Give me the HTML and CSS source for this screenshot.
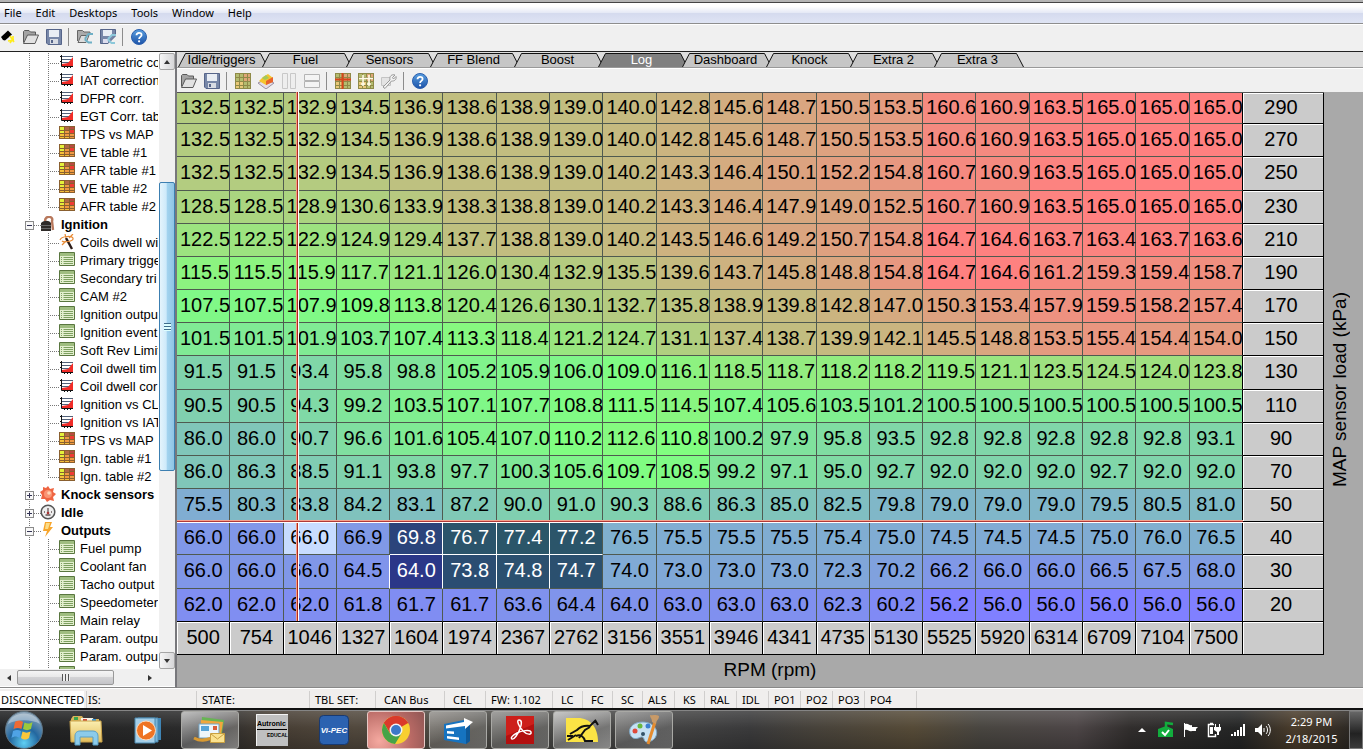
FILE: index.html
```html
<!DOCTYPE html>
<html lang="en">
<head>
<meta charset="utf-8">
<title>ECU tuning – Log</title>
<link rel="stylesheet" href="styles.css">
</head>
<body>
<svg class="defs" aria-hidden="true">
  <defs>
    <linearGradient id="gold" x1="0" y1="0" x2="0" y2="1"><stop offset="0" stop-color="#fbeeb0"/><stop offset="1" stop-color="#e2bd5c"/></linearGradient>
    <linearGradient id="blue" x1="0" y1="0" x2="0" y2="1"><stop offset="0" stop-color="#5aa0e0"/><stop offset="1" stop-color="#1c52a8"/></linearGradient>
    <radialGradient id="orb" cx=".5" cy=".85" r=".8"><stop offset="0" stop-color="#5fd0f5"/><stop offset=".5" stop-color="#23679f"/><stop offset="1" stop-color="#8ba4b8"/></radialGradient>
    <symbol id="i-folder" viewBox="0 0 16 16"><path d="M.5 13.500V2.500l1-1H6L7.500 3h5v3" fill="#a4a4a4" stroke="#5a5a5a"/><path d="M.5 14.500 4.500 6h11L12 14.500z" fill="#e2e2e2" stroke="#5a5a5a"/></symbol>
    <symbol id="i-save" viewBox="0 0 16 16"><path d="M.5.500h15v15H2L.5 14z" fill="#7787a8" stroke="#56658a"/><path d="M3 1h10v7H3z" fill="#e8edf4"/><path d="M4 10h8v5H4z" fill="#d8dce4"/><path d="M5 11h2v3H5z" fill="#56658a"/></symbol>
    <symbol id="i-folder2" viewBox="0 0 16 16"><path d="M.5 12V1.500h5L7 3h6v3" fill="#aaa" stroke="#666"/><path d="M1 13.500 4 6.500h8L9 13.500z" fill="#ddd" stroke="#666"/><path d="M16 5h-4.500L8.500 9v2l3 2.500H15" fill="none" stroke="#6fb0c6" stroke-width="2"/></symbol>
    <symbol id="i-save2" viewBox="0 0 16 16"><path d="M.5.500h15V7L8 14.500H.5z" fill="#7787a8" stroke="#56658a"/><path d="M3 1h9v6H3z" fill="#e8edf4"/><path d="M3 10h5v4H3z" fill="#dde"/><path d="M16 6h-4L8.500 9.500v1.500l3 3H15" fill="none" stroke="#8cc8da" stroke-width="2"/></symbol>
    <symbol id="i-help" viewBox="0 0 16 16"><circle cx="8" cy="8" r="7.500" fill="url(#blue)" stroke="#2b5fae"/><path d="M5.500 6.300C5.500 3 10.600 3 10.600 6c0 1.900-2.500 1.900-2.500 4" fill="none" stroke="#fff" stroke-width="1.800"/><circle cx="8.100" cy="12.300" r="1.100" fill="#fff"/></symbol>
    <symbol id="i-torch" viewBox="0 0 16 16"><path d="m1 8 7-6.500 4 4-7 6L3 11z" fill="#000"/><path d="m10 7 4 6M13 7v4M8 12l6-1M10 14l2-3" stroke="#ffec1a" stroke-width="1.600"/></symbol>
    <symbol id="i-grid" viewBox="0 0 16 16"><path d="M0 0h16v16H0z" fill="#b4bc70"/><path d="M8 0h8v9H8z" fill="#dfa677"/><path d="M0 9h8v7H0z" fill="#e8c878"/><path d="M0 .5h16M0 4.500h16M0 8.500h16M0 12.500h16M.5 0v16M4.500 0v16M8.500 0v16M12.500 0v16M15.500 0v16M0 15.500h16" stroke="#8f8a48"/></symbol>
    <symbol id="i-gridred" viewBox="0 0 16 16"><use href="#i-grid"/><path d="M7.500 0v16M0 6.500h16" stroke="#d8451c" stroke-width="2"/></symbol>
    <symbol id="i-gridplus" viewBox="0 0 16 16"><use href="#i-grid"/><path d="M1 5.500h14M5 2v11M11 2v11M3 11h4M9 11h4" stroke="#fffbe8" stroke-width="1.600"/></symbol>
    <symbol id="i-surface" viewBox="0 0 16 16"><path d="m0 10 8-4 8 4-8 6z" fill="#e4dce8" stroke="#9a8fa0"/><path d="m1 8 4-4 5-3 5 4-1 4-6 3z" fill="#f5c52e"/><path d="m8 8 7-4v5l-7 3z" fill="#e8642c"/><path d="m4 5 4-3 3 3-4 2z" fill="#a5c95a"/></symbol>
    <symbol id="i-cols" viewBox="0 0 16 16"><path d="M1.500.500h5v15h-5zM9.500.500h5v15h-5z" fill="#eee" stroke="#c8c8c8"/></symbol>
    <symbol id="i-rows" viewBox="0 0 16 16"><path d="M.5 1.500h15v6H.5zM.5 8.500h15v6H.5z" fill="#f4f4f4" stroke="#b4b4b4"/></symbol>
    <symbol id="i-wrench" viewBox="0 0 16 16"><path d="M.5 4.500h9v8h-9z" fill="#e4e4e4" stroke="#c4c4c4"/><path d="m2 14 7-7c-1-4 2-6 5-5l-2.500 2.500 1 1.500L15 3.500c1 3-2 5-4.500 4.500L4 15.500z" fill="#f2f2f2" stroke="#999"/></symbol>
    <symbol id="t-curve" viewBox="0 0 16 16"><path d="M2 2.500h12M2 5.500h12M2 8.500h12" stroke="#53627a"/><path d="M3 12v-2l6-1 5-6v9z" fill="#f02c28"/><path d="M2.500 1v11.500H14M1 2.500h2M1 7.500h2M5.500 12v2M8.500 12v2M11.500 12v2" fill="none" stroke="#111"/></symbol>
    <symbol id="t-map" viewBox="0 0 16 16"><path d="M0 0h16v13H0z" fill="#8a6030"/><path d="M1 1h4v3H1zM1 5h4v2H1z" fill="#e3f03a"/><path d="M1 8h4v2H1zM1 11h4v1H1zM6 11h4v1H6z" fill="#f6c03a"/><path d="M6 1h4v3H6z" fill="#b16a45"/><path d="M6 5h4v2H6zM6 8h4v2H6zM11 8h4v2h-4zM11 11h4v1h-4z" fill="#f09a42"/><path d="M11 1h4v2h-4z" fill="#b84a40"/><path d="M11 4h4v3h-4z" fill="#f03a34"/></symbol>
    <symbol id="t-form" viewBox="0 0 16 16"><path d="M.5.500h15v13H.5z" fill="#e3efcf" stroke="#59763f"/><path d="M1 1h14v3H1z" fill="#9fbd80"/><path d="M2 5.500h1M2 7.500h1M2 9.500h1M2 11.500h1M4.500 5.500H14M4.500 7.500H14M4.500 9.500H14M4.500 11.500H14" stroke="#7da060"/></symbol>
    <symbol id="t-wand" viewBox="0 0 16 16"><path d="m7 4 6 11" stroke="#2c1c18" stroke-width="2.400"/><path d="M1 6c1-4 14-5 13-1 0 2-9 4-11 2M3 11l4-4M10 4l4-4M6 0l1 4" fill="none" stroke="#e78a35" stroke-width="1.200"/></symbol>
    <symbol id="t-coil" viewBox="0 0 16 16"><path d="M1 7c3-3 8-3 10 0v8H1z" fill="#2e2a28"/><path d="M1 9.500h10M1 12.500h10" stroke="#666"/><path d="M5 5c0-6 9-5 7 0l1 9" fill="none" stroke="#b8785c" stroke-width="2.400"/></symbol>
    <symbol id="t-knock" viewBox="0 0 16 16"><path d="m8 0 2 3 4-1-1 4 3 2-3 3 1 4-4-1-3 2-2-3-4 0 1-4-2-3 3-2 0-3 3 1z" fill="#ef6542"/><circle cx="8" cy="8" r="4" fill="#fa9473"/><circle cx="9" cy="7" r="1.800" fill="#ffd5b4"/></symbol>
    <symbol id="t-idle" viewBox="0 0 16 16"><circle cx="8" cy="8" r="6.800" fill="#eee" stroke="#555" stroke-width="1.500"/><path d="M8 4v5M4 8h1M11 8h1M5.500 11h5" stroke="#655" stroke-width="1.300"/><circle cx="8" cy="9" r="1.300" fill="#a33"/></symbol>
    <symbol id="t-bolt" viewBox="0 0 16 16"><path d="M5 0h7l-2 5h3L5 15l2-6H3z" fill="#f7a52b"/><path d="M6 1h4L8 7H5z" fill="#fbdc87"/></symbol>
  </defs>
</svg>

<nav class="menubar">
  <button>File</button><button>Edit</button><button>Desktops</button><button>Tools</button><button>Window</button><button>Help</button>
</nav>
<div class="toolbar toolbar-main">
  <button class="tool first" aria-label="Find"><svg><use href="#i-torch"/></svg></button>
  <button class="tool" aria-label="Open"><svg><use href="#i-folder"/></svg></button>
  <button class="tool" aria-label="Save"><svg><use href="#i-save"/></svg></button>
  <span class="sep"></span>
  <button class="tool" aria-label="Open layout"><svg><use href="#i-folder2"/></svg></button>
  <button class="tool" aria-label="Save layout"><svg><use href="#i-save2"/></svg></button>
  <span class="sep"></span>
  <button class="tool" aria-label="Help"><svg><use href="#i-help"/></svg></button>
</div>

<main class="workspace">
  <aside class="sidebar">
    <ul class="tree" id="tree"></ul>
    <div class="vscroll">
      <button class="scroll-btn" aria-label="Scroll up"><i class="arrow up"></i></button>
      <div class="vtrack"><div class="vthumb"><i class="grip"></i></div></div>
      <button class="scroll-btn" aria-label="Scroll down"><i class="arrow down"></i></button>
    </div>
    <div class="hscroll">
      <button class="hbtn" aria-label="Scroll left"><i class="arrow left"></i></button>
      <div class="htrack"><div class="hthumb"><i class="grip side"></i></div></div>
      <button class="hbtn" aria-label="Scroll right"><i class="arrow right"></i></button>
    </div>
  </aside>

  <section class="desk">
    <div class="tabs" id="tabs"></div>
    <div class="toolbar toolbar-log">
      <button class="tool" aria-label="Open log"><svg><use href="#i-folder"/></svg></button>
      <button class="tool" aria-label="Save log"><svg><use href="#i-save"/></svg></button>
      <span class="sep"></span>
      <button class="tool" aria-label="Table view"><svg><use href="#i-grid"/></svg></button>
      <button class="tool" aria-label="3D view"><svg><use href="#i-surface"/></svg></button>
      <button class="tool" aria-label="Split columns"><svg><use href="#i-cols"/></svg></button>
      <button class="tool" aria-label="Split rows"><svg><use href="#i-rows"/></svg></button>
      <span class="sep"></span>
      <button class="tool" aria-label="Crosshair"><svg><use href="#i-gridred"/></svg></button>
      <button class="tool" aria-label="Interpolate"><svg><use href="#i-gridplus"/></svg></button>
      <button class="tool" aria-label="Settings"><svg><use href="#i-wrench"/></svg></button>
      <span class="sep"></span>
      <button class="tool" aria-label="Help"><svg><use href="#i-help"/></svg></button>
    </div>
    <div class="chart">
      <div class="map-wrap">
        <table class="map">
          <colgroup><col span="20"><col class="axis-col"></colgroup>
          <tbody id="map"></tbody>
        </table>
        <span class="cross-v"></span><span class="cross-h"></span>
      </div>
      <div class="y-title"><span>MAP sensor load (kPa)</span></div>
      <div class="x-title">RPM (rpm)</div>
    </div>
  </section>
</main>

<footer class="status">
  <span class="conn"><b>DISCONNECTED</b></span><span class="is">IS:</span><span>STATE:</span><span>TBL SET:</span><span class="in">CAN Bus</span><span class="in">CEL</span><span>FW: 1.102</span><span class="in">LC</span><span class="in">FC</span><span class="in">SC</span><span>ALS</span><span class="in">KS</span><span>RAL</span><span>IDL</span><span>PO1</span><span>PO2</span><span>PO3</span><span>PO4</span><span></span>
</footer>

<div class="taskbar">
  <button class="start" aria-label="Start"><svg width="40" height="40" viewBox="0 0 40 40"><circle cx="20" cy="20" r="18.500" fill="url(#orb)" stroke="#5d7382"/><path d="M11 12c3-2 5-2 8 0l-1.500 7c-3-1.500-5-1.500-8 0z" fill="#ee6a34"/><path d="M20.500 12.500c3 1.500 5 1.500 8-.5L27 19c-3 1.500-5 1.500-8 0z" fill="#9cc93b"/><path d="M9 21c3-1.500 5-1.500 8 0l-1.500 7c-3-2-5-2-8 0z" fill="#4fa3e6"/><path d="M18.500 21.500c3 1.500 5 1.500 8 0L25 28c-3 2-5 2-8 0z" fill="#fbc73a"/><path d="M4 14C8 0 32 0 36 14 28 9 12 9 4 14z" fill="#fff" opacity=".35"/></svg></button>
  <button class="task" aria-label="Explorer"><svg width="34" height="32" viewBox="0 0 34 32"><path d="M2 5 4 2h9l2 3h15v20H2z" fill="#d9b45a"/><path d="M5 3h4v3H5z" fill="#3ba54e"/><path d="M12 4h12l1 3H12z" fill="#f6f1e2"/><path d="M14 5h4v2h-4z" fill="#d24f3f"/><path d="M23 5h4v3h-4z" fill="#3e9bd8"/><path d="M1 7h31l1 21H2z" fill="url(#gold)" stroke="#c9a34b"/><path d="M6 31v-9c0-4 3-5 5-5h13c3 0 5 2 5 5v9h-5v-8H11v8z" fill="#8ccbea" stroke="#5b9fc4"/></svg></button>
  <button class="task" aria-label="Media Player"><svg width="32" height="30" viewBox="0 0 32 30"><path d="M10 3h19v22H10z" fill="#3f85b5"/><path d="M6 3h20v24H6z" fill="#78b4d8" stroke="#4a88ae"/><path d="M3 3h20v25H3z" fill="#a4cfe9" stroke="#4a88ae"/><circle cx="14" cy="15.500" r="9.500" fill="#ee7424" stroke="#fbdcc0"/><path d="m11 10 9 5.500-9 5.500z" fill="#fff"/></svg></button>
  <button class="task open lit" aria-label="Mail"><svg width="34" height="32" viewBox="0 0 34 32"><path d="m9 3 22 3-3 20-20-3z" fill="#68b454"/><path d="m8 6 22 2-3 19-20-3z" fill="#f2a63d"/><path d="M6 10h20v14H6z" fill="#eef6fb" stroke="#70a4c6"/><path d="M8 12h8v5H8z" fill="#58a4d8"/><path d="M20 12h4v4h-4z" fill="#d95d3c"/><path d="M1 24c7 4 12 2 18 0" stroke="#d99a32" stroke-width="3" fill="none"/><path d="M17.500 19.500h14v9h-14z" fill="#fae28f" stroke="#c9a040"/><path d="m18 20 6.500 5 6.500-5" fill="none" stroke="#c9a040"/></svg></button>
  <button class="task" aria-label="Autronic"><svg width="32" height="32" viewBox="0 0 32 32"><path d="M0 0h32v32H0z" fill="#c0c0c0"/><path d="M.5 32V.5H32" fill="none" stroke="#f4f4f4"/><text x="1" y="12" class="autronic">Autronic</text><path d="M1 15.500h30" stroke="#000"/><text x="11" y="23" class="autronic small">EDUCAL</text></svg></button>
  <button class="task" aria-label="Vi-PEC"><svg width="30" height="30" viewBox="0 0 30 30"><rect x=".5" y=".5" width="29" height="29" rx="4" fill="#2b62b0" stroke="#193a70"/><text x="15" y="18" text-anchor="middle" class="vipec">Vi-PEC</text></svg></button>
  <button class="task open chrome" aria-label="Chrome"><svg width="30" height="30" viewBox="0 0 30 30"><circle cx="15" cy="15" r="14" fill="#f8cf30"/><path d="M15 15 2.900 8A14 14 0 0 1 27.100 8z" fill="#da3a2b"/><path d="M15 8h12.100A14 14 0 0 0 2.900 8L9 18z" fill="#da3a2b"/><path d="M2.900 8A14 14 0 0 0 14 29l6.500-10.500L9 18.500z" fill="#46a348"/><circle cx="15" cy="15" r="6.500" fill="#f3f3f3"/><circle cx="15" cy="15" r="5" fill="#3c78c8"/></svg></button>
  <button class="task open" aria-label="Vi-PEC tuner"><svg width="32" height="30" viewBox="0 0 32 30"><path d="M2 9 22 5l6 3v18l-4 3-22-4z" fill="#1673c0"/><path d="m24 8 4-1v19l-4 3z" fill="#0f5898"/><path d="M4 10.500 22 7V3l9 4-8 7v-3L4 13.500z" fill="#fff"/><path d="m5 16 7 .5V19l-7-.5zM5 21l12 1.500V25L5 23.500z" fill="#fff"/></svg></button>
  <button class="task open" aria-label="Adobe Reader"><svg width="30" height="28" viewBox="0 0 30 28"><path d="M1 0h28v28H1z" fill="#b3100f"/><path d="M1 0h28v8L1 20z" fill="#dd2a22" opacity=".6"/><path d="M14 4c-3 0 0 7 4 11s9 4 8 1-10-1-14 1-7 5-5 6 6-5 8-10 2-9-1-9z" fill="none" stroke="#fff" stroke-width="1.500"/></svg></button>
  <button class="task open lit" aria-label="Autronic software"><svg width="34" height="26" viewBox="0 0 34 26"><path d="M1 1h12c12 0 20 9 20 24H1z" fill="#fbe345"/><path d="m3 23 8-5M5 17l7-4c3-3 6-5 13-4l6-6M11 19c5-2 8 1 9 5l8 0M14 21l6-8 5-3M2 19l6 0M30 3l3 5" fill="none" stroke="#111" stroke-width="2"/></svg></button>
  <button class="task open" aria-label="Paint"><svg width="34" height="32" viewBox="0 0 34 32"><path d="M3 20C0 10 14 5 24 10c9 5 7 17-4 18-4 0-2-6-6-5-4 2-9 3-11-3z" fill="#c6e1f3" stroke="#7fa8c6"/><circle cx="8" cy="17" r="2.500" fill="#df4a3a"/><circle cx="13" cy="12" r="2.500" fill="#68b83d"/><circle cx="21" cy="12" r="2.500" fill="#3c7fd0"/><circle cx="16" cy="20" r="2" fill="#34536a"/><path d="m28 8-7 22" stroke="#e58c2f" stroke-width="3"/><path d="M25 8c0-4-2-4-2-7 3 1 6-1 9 1 0 4-3 4-3 8z" fill="#c89a68"/></svg></button>
  <div class="tray">
    <svg width="24" height="20" viewBox="0 0 24 20"><path d="m8 12 4-4 4 4z" fill="#fff"/></svg>
    <svg width="24" height="20" viewBox="0 0 24 20"><path d="m4 9 8-3 7 3v8H4z" fill="#12ad3d"/><path d="M12 8V3l7 1" stroke="#12ad3d" stroke-width="2.500" fill="none"/><path d="m8 12 3 3 4-5" stroke="#fff" stroke-width="2" fill="none"/></svg>
    <svg width="24" height="20" viewBox="0 0 24 20"><path d="M6.500 3v14" stroke="#fff"/><path d="M7 4c4-1 4 2 7 1v6c-3 1-4-2-7-1zM14 7h6l-2 2 0 2h-4z" fill="#fff"/></svg>
    <svg width="24" height="20" viewBox="0 0 24 20"><path d="M12 4.500H6.500v12h7V14M8 3.500h3" stroke="#fff" stroke-width="1.500" fill="none"/><path d="M8 7h3v7H8z" fill="#fff"/><path d="M12 7h7v3l-2 2v3h-2v-3l-3-2zM13 4h1v3h-1zM17 4h1v3h-1z" fill="#fff"/></svg>
    <svg width="24" height="20" viewBox="0 0 24 20"><path d="M5 14h2v2H5zM8 12h2v4H8zM11 10h2v6h-2zM14 7h2v9h-2zM17 4h2v12h-2z" fill="#fff"/></svg>
    <svg width="24" height="20" viewBox="0 0 24 20"><path d="M5 8h3l4-4v12l-4-4H5z" fill="#fff"/><path d="M14 8v4M16 6c2 2 2 6 0 8M18 4c3 3 3 9 0 12" stroke="#fff" fill="none"/></svg>
    <time class="clock">2:29 PM<br>2/18/2015</time>
    <button class="peek" aria-label="Show desktop"></button>
  </div>
</div>
<script src="script.js"></script>
</body>
</html>
```
FILE: styles.css
```css
* { box-sizing: border-box; }
body {
  margin: 0;
  height: 100vh;
  display: flex;
  flex-direction: column;
  overflow: hidden;
  background: #f0f0f0;
  color: #000;
  font: 13px "Liberation Sans", Arial, sans-serif;
}
button { border: 0; padding: 0; margin: 0; background: none; font: inherit; color: inherit; }
.defs { position: absolute; width: 0; height: 0; }

.menubar {
  flex: none;
  display: flex;
  gap: 14px;
  height: 24px;
  padding: 0 4px;
  border-top: 2px solid #b4b4b4;
  border-bottom: 1px solid #8e8e8e;
  box-shadow: inset 0 1px #444;
  background: linear-gradient(#fff 20%, #e6eaf6 50%, #d4daee 51%, #dfe4f4);
  font: 11px "Noto Sans", "Open Sans", sans-serif;
}
.toolbar { flex: none; display: flex; align-items: center; background: #f0f0f0; }
.toolbar-main { height: 27px; padding-bottom: 3px; border-top: 1px solid #fff; }
.toolbar-log { height: 24px; border-top: 1px solid #fff; }
.tool { width: 23px; height: 22px; display: grid; place-items: center; }
.tool.first { width: 19px; padding-right: 4px; }
.tool svg { width: 16px; height: 16px; display: block; }
.sep { width: 1px; height: 18px; margin: 0 4px 0 3px; background: #8c8c8c; }

.workspace { flex: 1; min-height: 0; display: flex; border-top: 1px solid #222; }
.sidebar {
  flex: none;
  width: 177px;
  display: grid;
  grid-template: minmax(0, 1fr) 17px / minmax(0, 1fr) 17px;
  padding: 1px 0 1px;
  background: #fff;
  border-right: 2px solid #77777b;
  border-bottom: 1px solid #888;
}
.tree { margin: 0; padding: 0; list-style: none; overflow: hidden; }
.tree li {
  --v: repeating-linear-gradient(#777 0 1px, transparent 1px 2px);
  --h: repeating-linear-gradient(90deg, #777 0 1px, transparent 1px 2px);
  height: 18px;
  display: flex;
  align-items: center;
  white-space: nowrap;
  background: var(--v) 29px 0 / 1px 100% no-repeat, var(--v) 48px 0 / 1px 100% no-repeat, var(--h) 48px 10px / 11px 1px no-repeat;
}
.tree li.last {
  background: var(--v) 29px 0 / 1px 100% no-repeat, var(--v) 48px 0 / 1px 10px no-repeat, var(--h) 48px 10px / 11px 1px no-repeat;
}
.tree li.group {
  font-weight: bold;
  background: var(--v) 29px 0 / 1px 100% no-repeat, var(--h) 34px 10px / 7px 1px no-repeat;
}
.tree svg { width: 16px; height: 16px; flex: none; margin: 0 5px 0 59px; }
.tree .group svg { margin: 0 5px 0 6px; }
.tree .box {
  flex: none;
  width: 9px;
  height: 9px;
  margin: 2px 0 0 25px;
  border: 1px solid #8a8a8a;
  background: linear-gradient(#335, #335) center / 5px 1px no-repeat, #f8f8f8;
}
.tree .box.plus {
  background: linear-gradient(#335, #335) center / 5px 1px no-repeat, linear-gradient(#335, #335) center / 1px 5px no-repeat, #f8f8f8;
}
.vscroll { margin-left: 1px; display: flex; flex-direction: column; background: #f0f0f0; }
.vtrack { flex: 1; padding: 112px 0 181px; }
.vthumb {
  height: 100%;
  display: grid;
  place-items: center;
  border: 1px solid #3c7fb1;
  border-radius: 2px;
  background: linear-gradient(90deg, #e4f4fc, #cdeafa 45%, #a3d4ef 50%, #8fc4e4);
}
.scroll-btn { height: 17px; display: grid; place-items: center; border: 1px solid #a5a5a5; border-radius: 2px; background: linear-gradient(90deg, #f6f6f6, #d6d6d8); }
.hscroll { grid-column: 1; display: flex; background: #f0f0f0; }
.sidebar::after { content: ""; background: #f0f0f0; }
.hbtn { width: 17px; display: grid; place-items: center; }
.htrack { flex: 1; padding: 1px 27px 1px 0; }
.hthumb { height: 100%; display: grid; place-items: center; border: 1px solid #999; border-radius: 2px; background: linear-gradient(#f5f5f5, #e8e8e8 48%, #d3d3d5 50%, #c4c4c8); }
.arrow { width: 0; height: 0; border: 3px solid transparent; }
.up { border-top: 0; border-bottom: 4px solid #333; }
.down { border-bottom: 0; border-top: 4px solid #333; }
.left { border-left: 0; border-right: 4px solid #333; }
.right { border-right: 0; border-left: 4px solid #333; }
.grip { width: 7px; height: 8px; background: repeating-linear-gradient(#3f6d8c 0 1px, #dff 1px 3px); }
.grip.side { width: 8px; height: 7px; background: repeating-linear-gradient(90deg, #555 0 1px, #eee 1px 3px); }

.desk { flex: 1; min-width: 0; display: flex; flex-direction: column; background: #a9a9a9; border-bottom: 1px solid #888; }
.tabs { flex: none; height: 16px; display: flex; padding-left: 1px; background: #dedede; border-bottom: 1px solid #999; }
.tab { position: relative; width: 91px; height: 15px; margin-right: -7px; line-height: 16px; padding-right: 4px; }
.tab svg { position: absolute; left: 0; top: 0; width: 91px; height: 15px; }
.tab path { fill: #c6c6c6; stroke: #111; }
.tab span { position: relative; }
.tab[aria-selected="true"] { color: #fff; }
.tab[aria-selected="true"] path { fill: #808080; }

.chart { flex: 1; min-height: 0; display: grid; grid-template: minmax(0, 1fr) 32px / minmax(0, 1fr) 39px; }
.map-wrap { position: relative; min-height: 0; }
.map { width: 100%; height: 100%; table-layout: fixed; border-collapse: separate; border-spacing: 0; border-top: 1px solid #555; font-size: 20px; line-height: 24px; }
.axis-col { width: 81px; }
.map tr { height: 33px; }
.map tr:first-child { height: 31px; }
.map td, .map th { padding: 0 0 2px; text-align: center; font-weight: normal; white-space: nowrap; }
.map td { border-right: 1px solid #4f5a50; border-bottom: 1px solid #4f5a50; }
.map td.wide { padding-left: 3px; }
.map th { background: #cbcbcb; border-right: 1px solid #000; border-bottom: 1px solid #000; box-shadow: inset 1px 1px #fff; }
.map th[scope="row"] { padding-right: 4px; }
.map td:nth-last-child(2) { border-right-color: #000; }
.map tr:nth-last-child(2) td { border-bottom-color: #000; }
.map td.sel { color: #fff; border-color: #fff; }
.map td.sel-end { border-right-color: #4f5a50; }
.map td.sel-low { border-bottom-color: #4f5a50; }
.map td.sel-edge { border-right-color: #fff; }
.map td.live { background: #c8dcff; }
.cross-v, .cross-h { position: absolute; pointer-events: none; }
.cross-v { left: 10.4%; top: 0; bottom: 34px; width: 3px; background: linear-gradient(90deg, #f59a80 0 1px, #b02a20 1px 2px, #fff 2px); }
.cross-h { top: 76%; left: 0; right: 81px; height: 3px; background: linear-gradient(#f5a08c 0 1px, #b03a38 1px 2px, #fff 2px); }
.y-title, .x-title { font-size: 19px; display: grid; place-items: center; }
.y-title { grid-row: 1 / 3; grid-column: 2; padding-right: 8px; }
.y-title span { writing-mode: vertical-rl; transform: rotate(180deg); white-space: nowrap; }
.x-title { grid-row: 2; grid-column: 1; padding: 0 0 3px 39px; }

.status {
  flex: none;
  height: 22px;
  display: grid;
  grid-template-columns: 87px 110px 113px 66px 69px 41px 67px 30px 30px 30px 32px 30px 32px 32px 32px 32px 32px 52px 1fr;
  padding-top: 2px;
  background: #f0eeed;
  border-top: 1px solid #fff;
  border-bottom: 2px solid #111;
  font: 11px/17px "Noto Sans", "Open Sans", sans-serif;
  white-space: nowrap;
}
.status span { padding-left: 5px; border-right: 1px solid #d0cecd; }
.status span:last-child { border: 0; }
.status .in { padding-left: 8px; }
.status .is { padding-left: 1px; }
.status .conn { padding: 0 2px 0 0; }
.status b { display: block; padding-left: 1px; font-weight: normal; background: #fff; }

.taskbar {
  flex: none;
  height: 39px;
  display: flex;
  align-items: center;
  gap: 4px;
  border-top: 1px solid #858585;
  background:
    linear-gradient(rgba(255,255,255,.14), transparent 45%, rgba(0,0,0,.22)),
    linear-gradient(90deg, #202122 0, #2c2c2c 16%, #463d33 20%, #51483d 26%, #4a4945 36%, #444 48%, #3a3a3b 55%, #47423a 60%, #554a37 67%, #484540 72%, #4c4546 79%, #302d2c 83%, #242525 91%, #4a3c2b 95%, #262422 100%);
}
.start { width: 53px; height: 38px; display: flex; align-items: center; padding-left: 4px; overflow: hidden; }
.start svg { flex: none; }
.task { width: 58px; height: 38px; display: grid; place-items: center; }
.open { border: 1px solid #a9a9a5; border-radius: 3px; background: linear-gradient(160deg, rgba(255,255,255,.4), rgba(255,255,255,.15) 60%, rgba(255,255,255,.22)); }
.open.lit { background: linear-gradient(160deg, rgba(255,255,255,.65), rgba(255,255,255,.25) 60%, rgba(255,255,255,.4)); }
.open.chrome { border-color: #e7c9c5; background: radial-gradient(circle at 20% 80%, #f5a9a0, #b96a65 60%, #8f5654); }
.autronic { font: bold 7px "Liberation Sans", sans-serif; }
.autronic.small { font-size: 5px; }
.vipec { font: italic bold 8px "Liberation Sans", sans-serif; fill: #fff; }
.tray { margin-left: auto; display: flex; align-items: center; height: 38px; }
.clock { width: 75px; text-align: center; color: #fff; font: 11px/17px "Noto Sans", "Open Sans", sans-serif; }
.peek { width: 14px; height: 38px; border: 1px solid #777; background: linear-gradient(#666, #222 60%, #3a3a3a); }
```
FILE: script.js
```js
const loads = [290, 270, 250, 230, 210, 190, 170, 150, 130, 110, 90, 70, 50, 40, 30, 20];
const rpms = [500, 754, 1046, 1327, 1604, 1974, 2367, 2762, 3156, 3551, 3946, 4341, 4735, 5130, 5525, 5920, 6314, 6709, 7104, 7500];
const rows = `132.5 132.5 132.9 134.5 136.9 138.6 138.9 139.0 140.0 142.8 145.6 148.7 150.5 153.5 160.6 160.9 163.5 165.0 165.0 165.0
132.5 132.5 132.9 134.5 136.9 138.6 138.9 139.0 140.0 142.8 145.6 148.7 150.5 153.5 160.6 160.9 163.5 165.0 165.0 165.0
132.5 132.5 132.9 134.5 136.9 138.6 138.9 139.0 140.2 143.3 146.4 150.1 152.2 154.8 160.7 160.9 163.5 165.0 165.0 165.0
128.5 128.5 128.9 130.6 133.9 138.3 138.8 139.0 140.2 143.3 146.4 147.9 149.0 152.5 160.7 160.9 163.5 165.0 165.0 165.0
122.5 122.5 122.9 124.9 129.4 137.7 138.8 139.0 140.2 143.5 146.6 149.2 150.7 154.8 164.7 164.6 163.7 163.4 163.7 163.6
115.5 115.5 115.9 117.7 121.1 126.0 130.4 132.9 135.5 139.6 143.7 145.8 148.8 154.8 164.7 164.6 161.2 159.3 159.4 158.7
107.5 107.5 107.9 109.8 113.8 120.4 126.6 130.1 132.7 135.8 138.9 139.8 142.8 147.0 150.3 153.4 157.9 159.5 158.2 157.4
101.5 101.5 101.9 103.7 107.4 113.3 118.4 121.2 124.7 131.1 137.4 138.7 139.9 142.1 145.5 148.8 153.5 155.4 154.4 154.0
91.5 91.5 93.4 95.8 98.8 105.2 105.9 106.0 109.0 116.1 118.5 118.7 118.2 118.2 119.5 121.1 123.5 124.5 124.0 123.8
90.5 90.5 94.3 99.2 103.5 107.1 107.7 108.8 111.5 114.5 107.4 105.6 103.5 101.2 100.5 100.5 100.5 100.5 100.5 100.5
86.0 86.0 90.7 96.6 101.6 105.4 107.0 110.2 112.6 110.8 100.2 97.9 95.8 93.5 92.8 92.8 92.8 92.8 92.8 93.1
86.0 86.3 88.5 91.1 93.8 97.7 100.3 105.6 109.7 108.5 99.2 97.1 95.0 92.7 92.0 92.0 92.0 92.7 92.0 92.0
75.5 80.3 83.8 84.2 83.1 87.2 90.0 91.0 90.3 88.6 86.3 85.0 82.5 79.8 79.0 79.0 79.0 79.5 80.5 81.0
66.0 66.0 66.0 66.9 69.8 76.7 77.4 77.2 76.5 75.5 75.5 75.5 75.4 75.0 74.5 74.5 74.5 75.0 76.0 76.5
66.0 66.0 66.0 64.5 64.0 73.8 74.8 74.7 74.0 73.0 73.0 73.0 72.3 70.2 66.2 66.0 66.0 66.5 67.5 68.0
62.0 62.0 62.0 61.8 61.7 61.7 63.6 64.4 64.0 63.0 63.0 63.0 62.3 60.2 56.2 56.0 56.0 56.0 56.0 56.0`
  .split('\n').map(r => r.split(' '));

// Blue at the low end, green in the middle, red at the high end.
function shade(v, selected) {
  const t = (v - 56) / 109;
  const k = Math.abs(t * 2 - 1) * 127;
  let c = t < 0.5 ? [128, 255 - k, 128 + k] : [128 + k, 255 - k, 128];
  if (selected) c = [c[0] - 85, c[1] - 92, c[2] - 100];
  return `rgb(${c.map(Math.round).join(',')})`;
}

function cellClass(x, y, v) {
  const inRows = y === 13 || y === 14;
  const names = [];
  if (v.length > 4) names.push('wide');
  if (y === 13 && x === 2) names.push('live');
  if (inRows && x === 3 && y === 14) names.push('sel-edge');
  if (inRows && x >= 4 && x <= 7) {
    names.push('sel');
    if (x === 7) names.push('sel-end');
    if (y === 14) names.push('sel-low');
  }
  return names;
}

document.getElementById('map').innerHTML = rows.map((r, y) => '<tr>' + r.map((v, x) => {
  const names = cellClass(x, y, v);
  const fill = names.includes('live') ? '' : ` style="background:${shade(+v, names.includes('sel'))}"`;
  return `<td class="${names.join(' ')}"${fill}>${v}</td>`;
}).join('') + `<th scope="row">${loads[y]}</th></tr>`).join('')
  + '<tr>' + rpms.map(v => `<th scope="col">${v}</th>`).join('') + '<th></th></tr>';

const tree = [
  ['curve', 'Barometric co'], ['curve', 'IAT correction'], ['curve', 'DFPR corr.'], ['curve', 'EGT Corr. tab'],
  ['map', 'TPS vs MAP'], ['map', 'VE table #1'], ['map', 'AFR table #1'], ['map', 'VE table #2'], ['map', 'AFR table #2'],
  ['coil', 'Ignition', 'minus'],
  ['wand', 'Coils dwell wi'], ['form', 'Primary trigge'], ['form', 'Secondary tri'], ['form', 'CAM #2'],
  ['form', 'Ignition outpu'], ['form', 'Ignition event'], ['form', 'Soft Rev Limit'],
  ['curve', 'Coil dwell tim'], ['curve', 'Coil dwell cor'], ['curve', 'Ignition vs CL'], ['curve', 'Ignition vs IAT'],
  ['map', 'TPS vs MAP'], ['map', 'Ign. table #1'], ['map', 'Ign. table #2'],
  ['knock', 'Knock sensors', 'plus'], ['idle', 'Idle', 'plus'], ['bolt', 'Outputs', 'minus'],
  ['form', 'Fuel pump'], ['form', 'Coolant fan'], ['form', 'Tacho output'], ['form', 'Speedometer'],
  ['form', 'Main relay'], ['form', 'Param. outpu'], ['form', 'Param. outpu'], ['form', '']
];
document.getElementById('tree').innerHTML = tree.map(([icon, text, box], i) => {
  const last = !box && tree[i + 1] && tree[i + 1][2];
  return `<li class="${box ? 'group' : last ? 'last' : ''}">${box ? `<i class="box ${box}"></i>` : ''}<svg><use href="#t-${icon}"/></svg>${text}</li>`;
}).join('');

document.getElementById('tabs').innerHTML =
  ['Idle/triggers', 'Fuel', 'Sensors', 'FF Blend', 'Boost', 'Log', 'Dashboard', 'Knock', 'Extra 2', 'Extra 3']
    .map(t => `<button class="tab" role="tab" aria-selected="${t === 'Log'}"><svg viewBox="0 0 91 15"><path d="M.5 15 7.500 1.500h75l7 13.500"/></svg><span>${t}</span></button>`).join('');
```
